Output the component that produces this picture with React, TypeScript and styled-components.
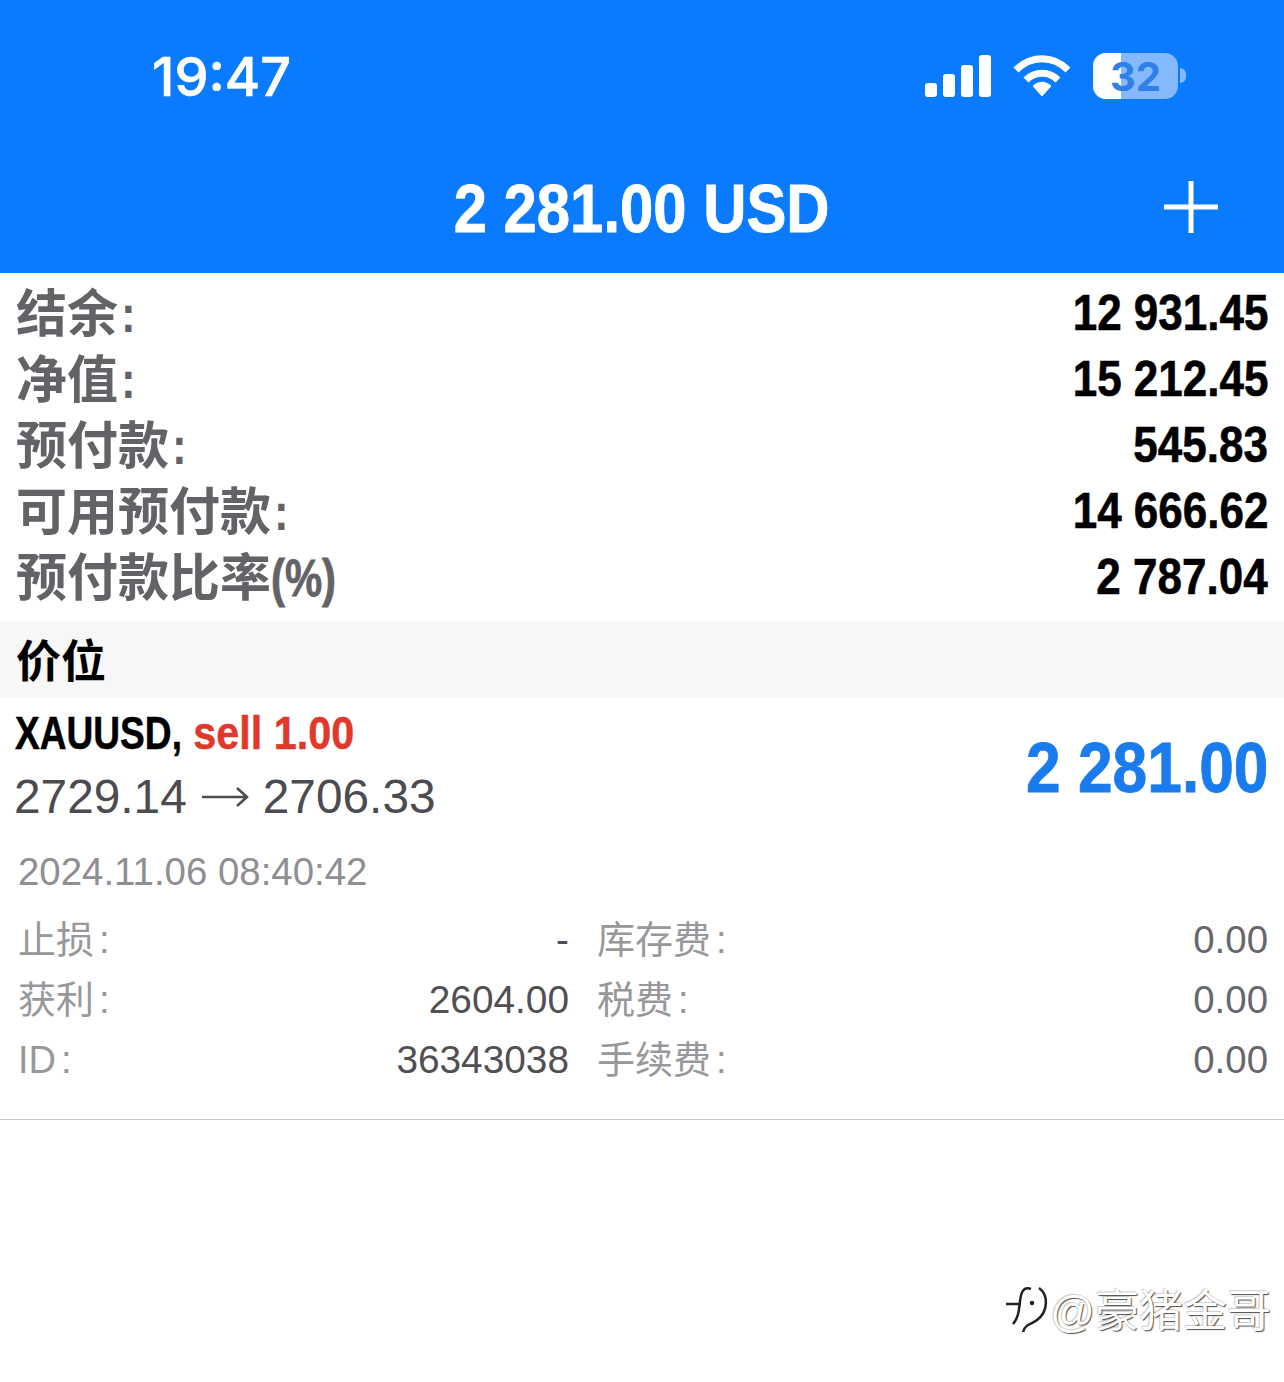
import styled, { createGlobalStyle } from 'styled-components';

const summary = [
  { label: '结余', suffix: ':', value: '12 931.45' },
  { label: '净值', suffix: ':', value: '15 212.45' },
  { label: '预付款', suffix: ':', value: '545.83' },
  { label: '可用预付款', suffix: ':', value: '14 666.62' },
  { label: '预付款比率', suffix: '(%)', value: '2 787.04' },
];

const details = [
  { label: '止损', value: '-', sideLabel: '库存费', sideValue: '0.00' },
  { label: '获利', value: '2604.00', sideLabel: '税费', sideValue: '0.00' },
  { label: 'ID', value: '36343038', sideLabel: '手续费', sideValue: '0.00' },
];

const App = () => {
  return (
    <Page>
      <GlobalStyle />
      <Header>
        <StatusBar>
          <Clock>19:47</Clock>
          <StatusIcons>
            <svg width="66" height="42" viewBox="0 0 66 42" fill="#fff">
              <rect x="0" y="28" width="12" height="14" rx="3" />
              <rect x="18" y="19" width="12" height="23" rx="3" />
              <rect x="36" y="10" width="12" height="32" rx="3" />
              <rect x="54" y="0" width="12" height="42" rx="3" />
            </svg>
            <svg width="58" height="42" viewBox="0 0 58 42" fill="none" stroke="#fff">
              <path d="M3 15 C18 0 40 0 55 15" strokeWidth="7" />
              <path d="M13 25 C22 16 36 16 45 25" strokeWidth="7" />
              <path d="M20 31 L29 41 L38 31 C32 26 26 26 20 31 Z" fill="#fff" strokeWidth="1" />
            </svg>
            <Battery>
              <BatteryLevel />
              <BatteryText>32</BatteryText>
              <BatteryTip />
            </Battery>
          </StatusIcons>
        </StatusBar>
        <TitleRow>
          <Title>2 281.00 USD</Title>
          <PlusIcon width="56" height="56" viewBox="0 0 56 56" stroke="#fff" strokeWidth="5">
            <path d="M28 2 V54 M1 28 H55" />
          </PlusIcon>
        </TitleRow>
      </Header>

      <Summary>
        {summary.map((row) => (
          <SummaryRow key={row.label}>
            <SummaryLabel>
              {row.label}
              <LabelSuffix $tight={row.suffix !== ':'}>{row.suffix}</LabelSuffix>
            </SummaryLabel>
            <SummaryValue>{row.value}</SummaryValue>
          </SummaryRow>
        ))}
      </Summary>

      <SectionBand>价位</SectionBand>

      <Position>
        <PositionTop>
          <div>
            <SymbolLine>
              <SymbolName>XAUUSD,</SymbolName> <Sell>sell 1.00</Sell>
            </SymbolLine>
            <Prices>
              2729.14
              <svg width="48" height="26" viewBox="0 0 48 26" fill="none" stroke="#4b4b50" strokeWidth="2.5">
                <path d="M1 13 H46 M36 4 L46 13 L36 22" />
              </svg>
              2706.33
            </Prices>
          </div>
          <Profit>2 281.00</Profit>
        </PositionTop>
        <OpenTime>2024.11.06 08:40:42</OpenTime>
        <DetailGrid>
          {details.map((row) => (
            <DetailRow key={row.label}>
              <DetailLabel>
                {row.label}
                <DetailColon>:</DetailColon>
              </DetailLabel>
              <DetailValue>{row.value}</DetailValue>
              <SideLabel>
                {row.sideLabel}
                <DetailColon>:</DetailColon>
              </SideLabel>
              <SideValue>{row.sideValue}</SideValue>
            </DetailRow>
          ))}
        </DetailGrid>
      </Position>

      <Watermark>
        <WatermarkLogo width="46" height="50" viewBox="0 0 46 50" fill="none" stroke="#222" strokeWidth="2.5">
          <path d="M3 21 H18 M28 6 C20 3 18 10 17 18 C16 26 16 34 10 41" />
          <path d="M36 5 C46 12 45 29 34 37 C29 41 22 41 20 49" />
          <circle cx="29" cy="20" r="1" fill="#222" />
        </WatermarkLogo>
        <WatermarkText>@豪猪金哥</WatermarkText>
      </Watermark>
    </Page>
  );
};

const GlobalStyle = createGlobalStyle`
  html, body {
    margin: 0;
    padding: 0;
    background: #fff;
  }
  * {
    box-sizing: border-box;
  }
`;

const Page = styled.div`
  position: relative;
  width: 1284px;
  height: 1382px;
  overflow: hidden;
  background: #fff;
  font-family: 'Liberation Sans', 'Noto Sans CJK SC', sans-serif;
`;

const Header = styled.header`
  height: 273px;
  background: #0a7aff;
  color: #fff;
`;

const StatusBar = styled.div`
  display: flex;
  justify-content: space-between;
  align-items: center;
  height: 152px;
  padding: 0 106px 0 152px;
`;

const Clock = styled.div`
  font-family: Inter, sans-serif;
  font-size: 54px;
  font-weight: 500;
  -webkit-text-stroke: 0.6px #fff;
`;

const StatusIcons = styled.div`
  display: flex;
  align-items: center;
  gap: 22px;
`;

const Battery = styled.div`
  position: relative;
  width: 85px;
  height: 46px;
  border-radius: 13px;
  background: #84b9ff;
`;

const BatteryLevel = styled.div`
  width: 28px;
  height: 100%;
  background: #fff;
  border-radius: 13px 0 0 13px;
`;

const BatteryText = styled.div`
  position: absolute;
  inset: 0;
  display: flex;
  align-items: center;
  justify-content: center;
  color: #2f7fe6;
  font-family: Inter, sans-serif;
  font-size: 40px;
  font-weight: 700;
`;

const BatteryTip = styled.div`
  position: absolute;
  right: -8px;
  top: 15px;
  width: 6px;
  height: 15px;
  border-radius: 0 6px 6px 0;
  background: #84b9ff;
`;

const TitleRow = styled.div`
  position: relative;
  display: flex;
  justify-content: center;
  align-items: center;
  height: 112px;
`;

const Title = styled.div`
  font-size: 68px;
  font-weight: 700;
  white-space: pre;
  -webkit-text-stroke: 0.8px #fff;
  transform: scaleX(0.88);
`;

const PlusIcon = styled.svg`
  position: absolute;
  right: 65px;
  top: 27px;
`;

const Summary = styled.section`
  display: flex;
  flex-direction: column;
  height: 348px;
  padding-top: 7px;
`;

const SummaryRow = styled.div`
  display: flex;
  justify-content: space-between;
  align-items: center;
  height: 66px;
  padding: 0 16px;
`;

const SummaryLabel = styled.div`
  padding-bottom: 7px;
  color: #636367;
  font-size: 51px;
  font-weight: 700;
  white-space: pre;
`;

const LabelSuffix = styled.span<{ $tight: boolean }>`
  display: inline-block;
  margin-left: ${(p) => (p.$tight ? 0 : 3)}px;
  -webkit-text-stroke: ${(p) => (p.$tight ? 0.8 : 0)}px #636367;
  transform: scaleX(${(p) => (p.$tight ? 0.82 : 0.86)});
  transform-origin: left center;
`;

const SummaryValue = styled.div`
  color: #000;
  font-size: 50px;
  font-weight: 700;
  white-space: pre;
  -webkit-text-stroke: 0.6px #000;
  transform: scaleX(0.88);
  transform-origin: right center;
`;

const SectionBand = styled.div`
  display: flex;
  align-items: center;
  height: 77px;
  padding: 0 16px 3px;
  background: #f7f7f7;
  color: #000;
  font-size: 45px;
  font-weight: 700;
`;

const Position = styled.section`
  height: 422px;
  padding: 8px 16px 0;
  border-bottom: 1px solid #c8c8cc;
`;

const PositionTop = styled.div`
  display: flex;
  justify-content: space-between;
  align-items: center;
  height: 124px;
`;

const SymbolLine = styled.div`
  height: 50px;
  margin: -2px 0 0 -1px;
  color: #000;
  font-size: 47px;
  font-weight: 700;
  line-height: 50px;
  white-space: pre;
  -webkit-text-stroke: 0.5px currentColor;
  transform: scaleX(0.88);
  transform-origin: left center;
`;

const SymbolName = styled.span`
  display: inline-block;
  margin-right: -22px;
  transform: scaleX(0.897);
  transform-origin: left center;
`;

const Sell = styled.span`
  color: #e0392b;
`;

const Prices = styled.div`
  display: flex;
  align-items: center;
  gap: 14px;
  margin: 10px 0 0 -2px;
  color: #4b4b50;
  font-size: 47.8px;
  line-height: 58px;
  white-space: pre;
`;

const Profit = styled.div`
  color: #1a7cec;
  font-size: 70px;
  font-weight: 700;
  white-space: pre;
  -webkit-text-stroke: 0.8px #1a7cec;
  transform: scaleX(0.89);
  transform-origin: right center;
`;

const OpenTime = styled.div`
  margin-top: 17px;
  padding-left: 2px;
  color: #8e8e93;
  font-size: 38.4px;
  line-height: 50px;
`;

const DetailGrid = styled.div`
  margin-top: 13px;
  padding-left: 2px;
`;

const DetailRow = styled.div`
  display: grid;
  grid-template-columns: 195px 356px 200px 1fr;
  align-items: baseline;
  height: 60px;
  line-height: 60px;
`;

const DetailLabel = styled.div`
  color: #98989c;
  font-size: 38px;
  white-space: pre;
`;

const SideLabel = styled(DetailLabel)`
  padding-left: 28px;
`;

const DetailColon = styled.span`
  margin-left: 5px;
`;

const DetailValue = styled.div`
  color: #4f4f54;
  font-size: 38.8px;
  text-align: right;
  white-space: pre;
`;

const SideValue = styled(DetailValue)`
  color: #66666b;
  font-size: 38.4px;
`;

const Watermark = styled.div`
  position: absolute;
  right: 13px;
  bottom: 42px;
  display: flex;
  align-items: center;
  gap: 1px;
`;

const WatermarkLogo = styled.svg`
  display: block;
`;

const WatermarkText = styled.div`
  color: #fff;
  font-size: 44px;
  white-space: pre;
  text-shadow: 1px 1px 1px rgba(0, 0, 0, 0.7), -1px -1px 1px rgba(0, 0, 0, 0.2);
`;

export default App;
